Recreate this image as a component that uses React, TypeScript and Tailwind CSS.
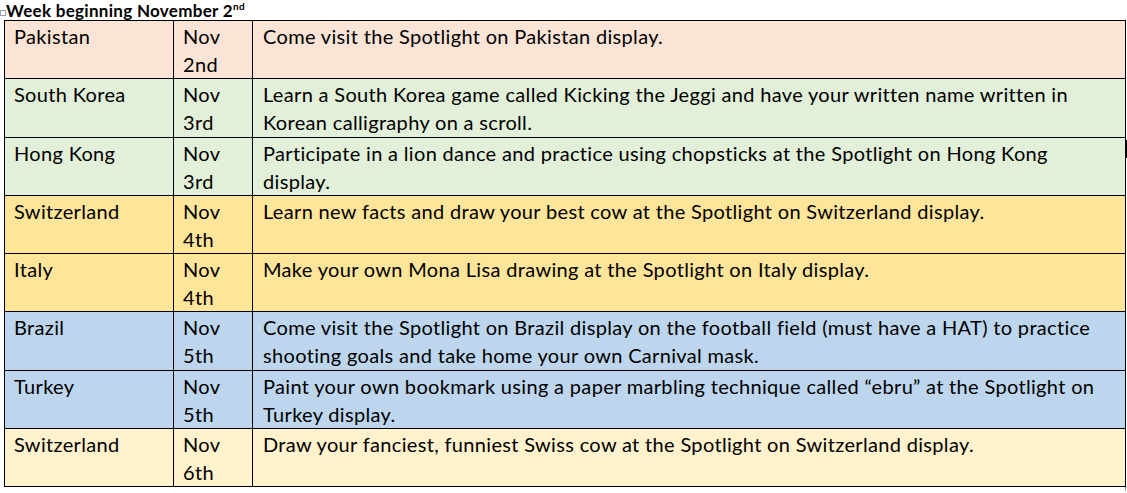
const rows = [
  { place: "Pakistan", day: "2nd", bg: "bg-[#fbe4d5]", text: ["Come visit the Spotlight on Pakistan display."] },
  {
    place: "South Korea",
    day: "3rd",
    bg: "bg-[#e2efd9]",
    text: [
      "Learn a South Korea game called Kicking the Jeggi and have your written name written in",
      "Korean calligraphy on a scroll.",
    ],
  },
  {
    place: "Hong Kong",
    day: "3rd",
    bg: "bg-[#e2efd9]",
    text: ["Participate in a lion dance and practice using chopsticks at the Spotlight on Hong Kong", "display."],
  },
  {
    place: "Switzerland",
    day: "4th",
    bg: "bg-[#ffe599]",
    text: ["Learn new facts and draw your best cow at the Spotlight on Switzerland display."],
  },
  { place: "Italy", day: "4th", bg: "bg-[#ffe599]", text: ["Make your own Mona Lisa drawing at the Spotlight on Italy display."] },
  {
    place: "Brazil",
    day: "5th",
    bg: "bg-[#bdd6ee]",
    text: [
      "Come visit the Spotlight on Brazil display on the football field (must have a HAT) to practice",
      "shooting goals and take home your own Carnival mask.",
    ],
  },
  {
    place: "Turkey",
    day: "5th",
    bg: "bg-[#bdd6ee]",
    text: [
      "Paint your own bookmark using a paper marbling technique called \u201cebru\u201d at the Spotlight on",
      "Turkey display.",
    ],
  },
  {
    place: "Switzerland",
    day: "6th",
    bg: "bg-[#fff2cc]",
    text: ["Draw your fanciest, funniest Swiss cow at the Spotlight on Switzerland display."],
  },
];

export default function App() {
  return (
    <div className="relative w-[1127px] h-[493px] bg-white text-black font-['Lato','Open_Sans',sans-serif]">
      <div className="flex items-end h-[20px] pl-[6px] relative">
        {/* table move handle */}
        <span className="absolute left-0 top-[10px] w-[6px] h-[6px] border border-gray-400" />
        <span className="text-[17px] leading-[19px] font-bold tracking-[0.3px]">
          Week beginning November 2<sup className="text-[10px] align-[7px] relative top-0">nd</sup>
        </span>
      </div>
      <table className="ml-[4px] border-collapse table-fixed w-[1121px] text-[20px] leading-[28px] tracking-[0.33px]">
        <colgroup>
          <col className="w-[169px]" />
          <col className="w-[79px]" />
          <col className="w-[873px]" />
        </colgroup>
        <tbody>
          {rows.map((r, i) => (
            <tr key={i} className={`${r.bg} h-[58.25px]`}>
              <td className="border border-black align-top pl-[9px] pt-[1px]">{r.place}</td>
              <td className="border border-black align-top pl-[9px] pt-[1px]">
                Nov
                <br />
                {r.day}
              </td>
              <td className="border border-black align-top pl-[10px] pt-[1px] whitespace-nowrap">
                {r.text.map((t, j) => (
                  <div key={j}>{t}</div>
                ))}
              </td>
            </tr>
          ))}
        </tbody>
      </table>
      {/* text cursor and resize marks */}
      <span className="absolute left-[1125px] top-[140px] w-[2px] h-[18px] bg-black" />
      <span className="absolute left-[1125px] top-[487px] w-[2px] h-[4px] border-l border-t border-gray-400" />
    </div>
  );
}
